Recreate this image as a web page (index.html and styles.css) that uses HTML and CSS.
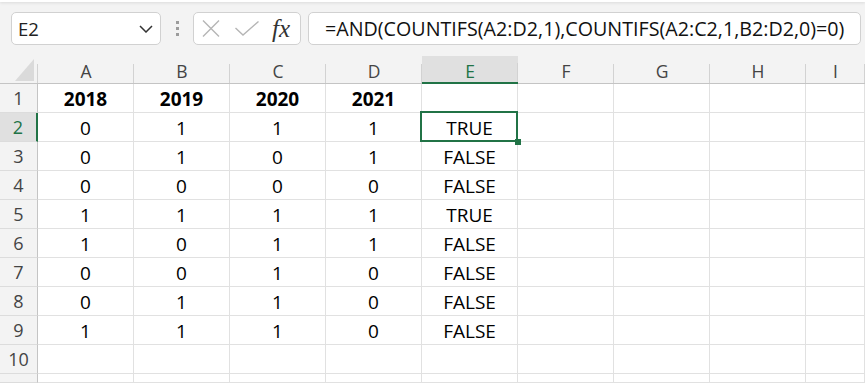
FILE: index.html
```html
<!DOCTYPE html>
<html>
<head>
<title>COUNTIFS check</title>
<link rel="stylesheet" href="styles.css">
</head>
<body>
<div class="ribbon-edge"></div>
<div class="toolbar">
  <div class="namebox">
    <span>E2</span>
    <svg class="chev" width="14" height="8" viewBox="0 0 14 8"><path d="M1 1 L7 7 L13 1" fill="none" stroke="#333" stroke-width="1.5"/></svg>
  </div>
  <div class="grip"><i></i><i></i><i></i></div>
  <div class="fxbox">
    <svg class="cancel" width="18" height="17" viewBox="0 0 18 17"><path d="M1 0.5 L17 16.5 M17 0.5 L1 16.5" stroke="#b5b5b5" stroke-width="1.4"/></svg>
    <svg class="enter" width="24" height="15" viewBox="0 0 24 15"><path d="M0.5 7 L8 14 L23.5 0.5" fill="none" stroke="#b5b5b5" stroke-width="1.4"/></svg>
    <span class="fx">fx</span>
  </div>
  <div class="formula">=AND(COUNTIFS(A2:D2,1),COUNTIFS(A2:C2,1,B2:D2,0)=0)</div>
</div>

<div class="sheet">
  <div class="ch corner"><span class="tri"></span></div>
  <div class="ch">A</div><div class="ch">B</div><div class="ch">C</div><div class="ch">D</div>
  <div class="ch on">E</div><div class="ch">F</div><div class="ch">G</div><div class="ch">H</div><div class="ch">I</div>

  <div class="rh">1</div>
  <div class="c b">2018</div><div class="c b">2019</div><div class="c b">2020</div><div class="c b">2021</div>
  <div class="c"></div><div class="c"></div><div class="c"></div><div class="c"></div><div class="c"></div>

  <div class="rh on">2</div>
  <div class="c">0</div><div class="c">1</div><div class="c">1</div><div class="c">1</div>
  <div class="c sel">TRUE</div><div class="c"></div><div class="c"></div><div class="c"></div><div class="c"></div>

  <div class="rh">3</div>
  <div class="c">0</div><div class="c">1</div><div class="c">0</div><div class="c">1</div>
  <div class="c">FALSE</div><div class="c"></div><div class="c"></div><div class="c"></div><div class="c"></div>

  <div class="rh">4</div>
  <div class="c">0</div><div class="c">0</div><div class="c">0</div><div class="c">0</div>
  <div class="c">FALSE</div><div class="c"></div><div class="c"></div><div class="c"></div><div class="c"></div>

  <div class="rh">5</div>
  <div class="c">1</div><div class="c">1</div><div class="c">1</div><div class="c">1</div>
  <div class="c">TRUE</div><div class="c"></div><div class="c"></div><div class="c"></div><div class="c"></div>

  <div class="rh">6</div>
  <div class="c">1</div><div class="c">0</div><div class="c">1</div><div class="c">1</div>
  <div class="c">FALSE</div><div class="c"></div><div class="c"></div><div class="c"></div><div class="c"></div>

  <div class="rh">7</div>
  <div class="c">0</div><div class="c">0</div><div class="c">1</div><div class="c">0</div>
  <div class="c">FALSE</div><div class="c"></div><div class="c"></div><div class="c"></div><div class="c"></div>

  <div class="rh">8</div>
  <div class="c">0</div><div class="c">1</div><div class="c">1</div><div class="c">0</div>
  <div class="c">FALSE</div><div class="c"></div><div class="c"></div><div class="c"></div><div class="c"></div>

  <div class="rh">9</div>
  <div class="c">1</div><div class="c">1</div><div class="c">1</div><div class="c">0</div>
  <div class="c">FALSE</div><div class="c"></div><div class="c"></div><div class="c"></div><div class="c"></div>

  <div class="rh">10</div>
  <div class="c"></div><div class="c"></div><div class="c"></div><div class="c"></div>
  <div class="c"></div><div class="c"></div><div class="c"></div><div class="c"></div><div class="c"></div>

  <div class="rh"></div>
  <div class="c"></div><div class="c"></div><div class="c"></div><div class="c"></div>
  <div class="c"></div><div class="c"></div><div class="c"></div><div class="c"></div><div class="c"></div>
</div>
</body>
</html>
```

FILE: styles.css
```css
*{
  box-sizing: border-box;
}
body{
  margin: 0;
  height: 383px;
  overflow: hidden;
  background-color: #f3f3f3;
  font-family: "Open Sans", sans-serif;
  color: #000;
}

/* formula bar */
.ribbon-edge{
  height: 2px;
  background-color: #fff;
  box-shadow: 0 1px 3px rgba(0,0,0,.12);
}
.toolbar{
  display: flex;
  align-items: center;
  height: 54px;
  padding: 10px 0 11px 11px;
}
.namebox{
  width: 150px;
  height: 33px;
  background-color: #fff;
  border: 1px solid #d1d1d1;
  border-radius: 5px;
  display: flex;
  align-items: center;
  justify-content: space-between;
  padding: 0 7px 0 6px;
  font-size: 18.5px;
  color: #222;
}
.grip{
  display: flex;
  flex-direction: column;
  gap: 3px;
  margin: 0 14px 0 15px;
}
.grip i{
  display: block;
  width: 3px;
  height: 3px;
  background-color: #9c9c9c;
}
.fxbox{
  width: 108px;
  height: 33px;
  background-color: #fff;
  border: 1px solid #d1d1d1;
  border-radius: 5px;
  display: flex;
  align-items: center;
  padding-left: 8px;
}
.enter{
  margin-left: 15px;
}
.fx{
  margin-left: 13px;
  font-family: "Liberation Serif", serif;
  font-style: italic;
  font-size: 25px;
  color: #333;
  line-height: 1;
}
.formula{
  margin-left: 7px;
  width: 553px;
  height: 33px;
  background-color: #fff;
  border: 1px solid #d1d1d1;
  border-radius: 5px;
  padding-left: 16px;
  font-size: 19.7px;
  line-height: 31px;
  color: #111;
  white-space: nowrap;
}

/* sheet */
.sheet{
  display: grid;
  grid-template-columns: 38px repeat(8, 96px) 59px;
  grid-template-rows: 28px repeat(10, 29px) 1fr;
  height: 327px;
  background-color: #fff;
}
.ch{
  background: #f3f3f3 linear-gradient(#d2d2d2, #d2d2d2) right bottom / 1px 19px no-repeat;
  border-bottom: 1px solid #c4c4c4;
  text-align: center;
  font-size: 17.5px;
  line-height: 23px;
  padding-top: 4px;
  color: #444;
}
.ch.on{
  background-color: #e0e0e0;
  color: #217346;
  border-bottom: 2px solid #217346;
}
.corner{
  display: flex;
  justify-content: flex-end;
  align-items: flex-end;
  padding: 0 4px 2px 0;
}
.tri{
  width: 19px;
  height: 22px;
  background-color: #dadada;
  clip-path: polygon(100% 0, 100% 100%, 0 100%);
}
.rh{
  background-color: #f3f3f3;
  border-right: 1px solid #c4c4c4;
  border-bottom: 1px solid #dcdcdc;
  text-align: center;
  font-size: 18px;
  line-height: 28px;
  color: #444;
  overflow: hidden;
}
.rh.on{
  background-color: #e0e0e0;
  color: #217346;
  border-right: 2px solid #217346;
}
.c{
  border-right: 1px solid #e1e1e1;
  border-bottom: 1px solid #e1e1e1;
  text-align: center;
  font-size: 19px;
  line-height: 26px;
  padding-top: 2px;
  overflow: hidden;
}
.b{
  font-weight: 700;
}
.sel{
  position: relative;
  overflow: visible;
}
.sel::after{
  content: "";
  position: absolute;
  top: -2px;
  left: -2px;
  right: -1px;
  bottom: -1px;
  border: 2px solid #217346;
}
.sel::before{
  content: "";
  position: absolute;
  right: -4px;
  bottom: -4px;
  width: 6px;
  height: 6px;
  background-color: #217346;
  z-index: 1;
}
```
